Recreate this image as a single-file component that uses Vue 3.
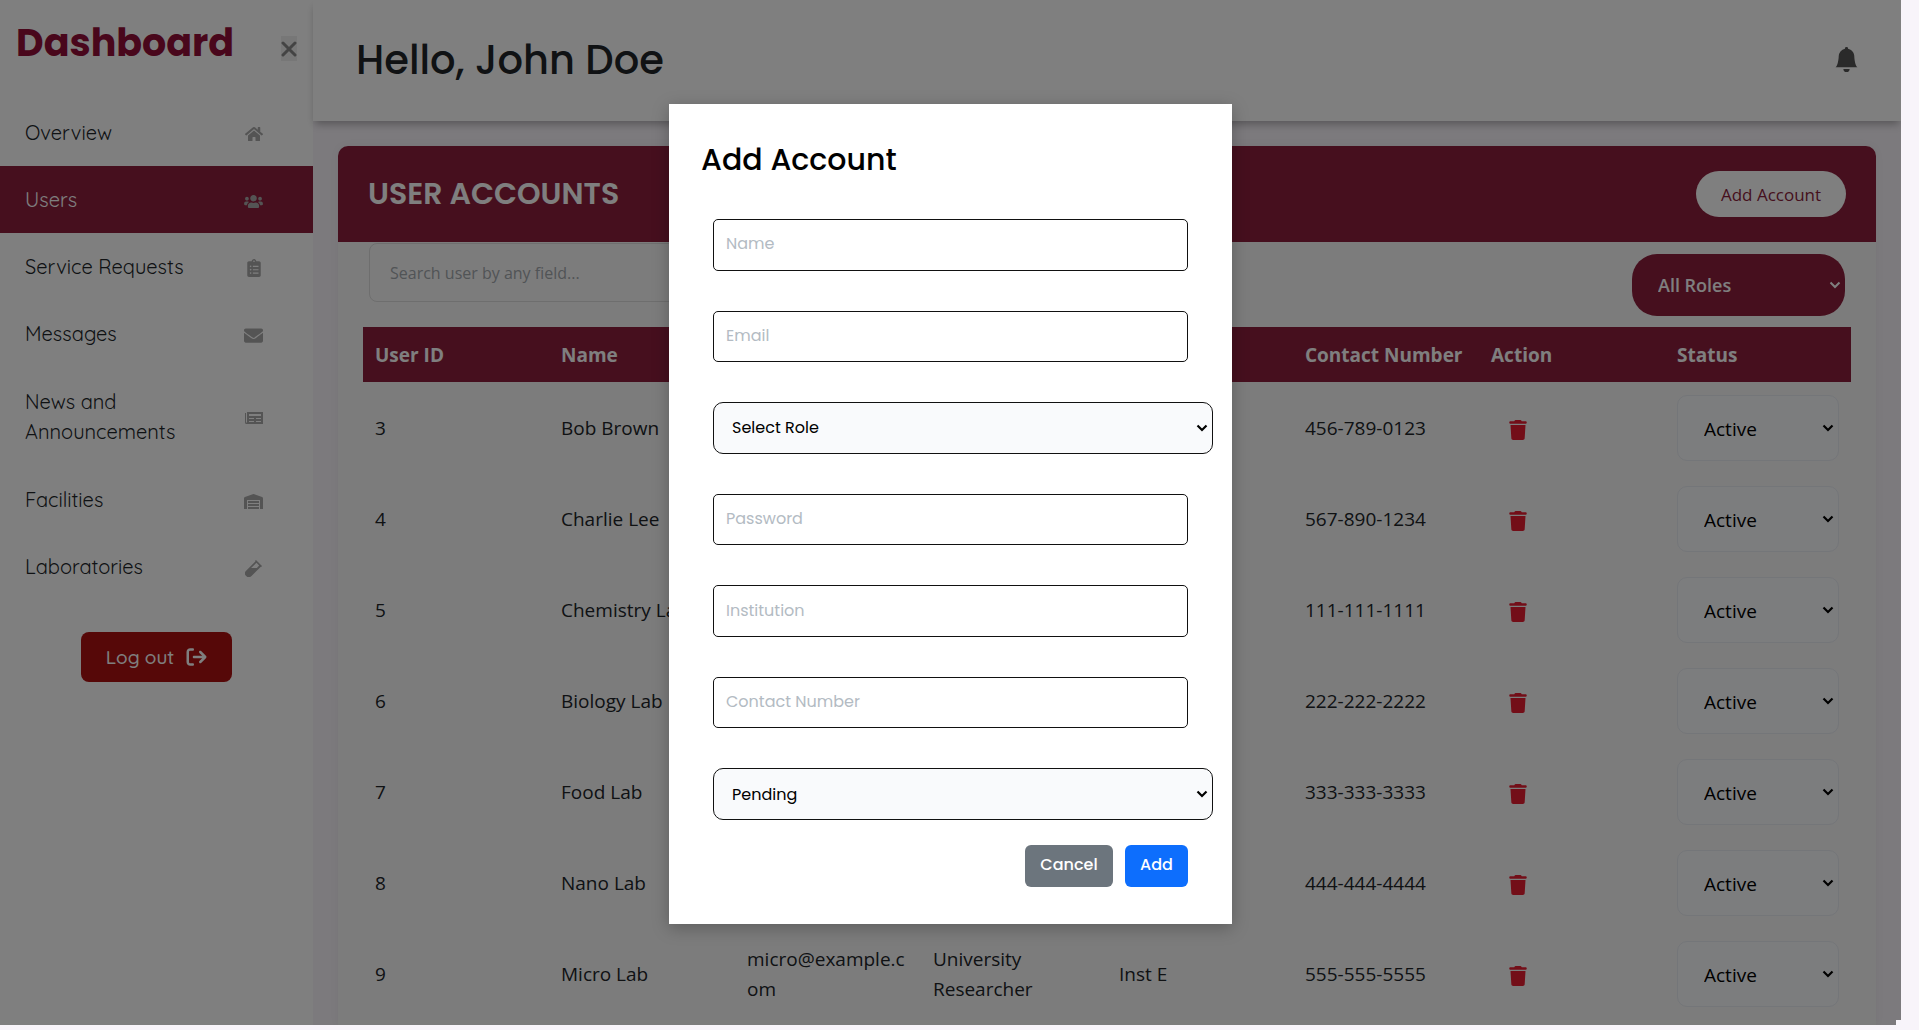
<script setup>
import { ref } from 'vue'

const navItems = [
  { label: 'Overview', icon: 'home' },
  { label: 'Users', icon: 'users', active: true },
  { label: 'Service Requests', icon: 'clipboard' },
  { label: 'Messages', icon: 'envelope' },
  { label: 'News and Announcements', icon: 'newspaper', tall: true },
  { label: 'Facilities', icon: 'warehouse' },
  { label: 'Laboratories', icon: 'vial' },
]

const icons = {
  home: {
    box: '0 0 576 512', w: 18, h: 16,
    d: 'M280.37 148.26L96 300.11V464a16 16 0 0 0 16 16l112.06-.29a16 16 0 0 0 15.92-16V368a16 16 0 0 1 16-16h64a16 16 0 0 1 16 16v95.64a16 16 0 0 0 16 16.05L464 480a16 16 0 0 0 16-16V300L295.67 148.26a12.19 12.19 0 0 0-15.3 0zM571.6 251.47L488 182.56V44.05a12 12 0 0 0-12-12h-56a12 12 0 0 0-12 12v72.61L318.47 43a48 48 0 0 0-61 0L4.34 251.47a12 12 0 0 0-1.6 16.9l25.5 31A12 12 0 0 0 45.15 301l235.22-193.74a12.19 12.19 0 0 1 15.3 0L530.9 301a12 12 0 0 0 16.9-1.6l25.5-31a12 12 0 0 0-1.7-16.93z',
  },
  users: {
    box: '0 0 640 512', w: 19, h: 15,
    d: 'M96 224c35.3 0 64-28.7 64-64s-28.7-64-64-64-64 28.7-64 64 28.7 64 64 64zm448 0c35.3 0 64-28.7 64-64s-28.7-64-64-64-64 28.7-64 64 28.7 64 64 64zm32 32h-64c-17.6 0-33.5 7.1-45.1 18.6 40.3 22.1 68.9 62 75.1 109.4h66c17.7 0 32-14.3 32-32v-32c0-35.3-28.7-64-64-64zm-256 0c61.9 0 112-50.1 112-112S381.9 32 320 32 208 82.1 208 144s50.1 112 112 112zm76.8 32h-8.3c-20.8 10-43.9 16-68.5 16s-47.6-6-68.5-16h-8.3C179.6 288 128 339.6 128 403.2V432c0 26.5 21.5 48 48 48h288c26.5 0 48-21.5 48-48v-28.8c0-63.6-51.6-115.2-115.2-115.2zm-223.7-13.4C161.5 263.1 145.6 256 128 256H64c-35.3 0-64 28.7-64 64v32c0 17.7 14.3 32 32 32h65.9c6.3-47.4 34.9-87.3 75.2-109.4z',
  },
  clipboard: {
    box: '0 0 384 512', w: 14, h: 18,
    d: 'M336 64h-80c0-35.3-28.7-64-64-64s-64 28.7-64 64H48C21.5 64 0 85.5 0 112v352c0 26.5 21.5 48 48 48h288c26.5 0 48-21.5 48-48V112c0-26.5-21.5-48-48-48zM96 424c-13.3 0-24-10.7-24-24s10.7-24 24-24 24 10.7 24 24-10.7 24-24 24zm0-96c-13.3 0-24-10.7-24-24s10.7-24 24-24 24 10.7 24 24-10.7 24-24 24zm0-96c-13.3 0-24-10.7-24-24s10.7-24 24-24 24 10.7 24 24-10.7 24-24 24zm96-192c13.3 0 24 10.7 24 24s-10.7 24-24 24-24-10.7-24-24 10.7-24 24-24zm128 376H160v-32h160zm0-96H160v-32h160zm0-96H160v-32h160z',
  },
  envelope: {
    box: '0 0 512 512', w: 19, h: 19,
    d: 'M502.3 190.8c3.9-3.1 9.7-.2 9.7 4.7V400c0 26.5-21.5 48-48 48H48c-26.5 0-48-21.5-48-48V195.6c0-5 5.7-7.8 9.7-4.7 22.4 17.4 52.1 39.5 154.1 113.6 21.1 15.4 56.7 47.8 92.2 47.6 35.7.3 72-32.8 92.3-47.6 102-74.1 131.6-96.3 154-113.7zM256 320c23.2.4 56.6-29.2 73.4-41.4 132.7-96.3 142.8-104.7 173.4-128.7 5.8-4.5 9.2-11.5 9.2-18.9v-19c0-26.5-21.5-48-48-48H48c-26.5 0-48 21.5-48 48v19c0 7.4 3.4 14.3 9.2 18.9 30.6 23.9 40.7 32.4 173.4 128.7 16.8 12.2 50.2 41.8 73.4 41.4z',
  },
  newspaper: {
    box: '0 0 18 12', w: 18, h: 12,
    d: 'M2 0H18V12H1.5A1.5 1.5 0 0 1 0 10.5V1H1V10.5H2ZM4 2V4H16V2ZM4 6V7H9V6ZM11 6V7H16V6ZM4 9V10H9V9ZM11 9V10H16V9Z',
  },
  warehouse: {
    box: '0 0 19 15', w: 19, h: 15,
    d: 'M0 15V4.2Q0 3.3 .9 2.9L8.7 .2Q9.5 -.1 10.3 .2L18.1 2.9Q19 3.3 19 4.2V15H16V6H3V15ZM4 7H15V9H4ZM4 10H15V12H4ZM4 13H15V15H4Z',
  },
  vial: {
    box: '0 0 17 17', w: 17, h: 17,
    d: 'M10.3 .4L11 0L17 6L16.5 6.8L15.6 6.9L6.5 16A3.7 3.7 0 0 1 1.1 10.7L10.3 1.5ZM11.4 2.8L6.1 8.1H11.8L14.2 5.6Z',
  },
}

const columns = ['User ID', 'Name', 'Email', 'Role', 'Institution', 'Contact Number', 'Action', 'Status']

const users = ref([
  { id: 3, name: 'Bob Brown', contact: '456-789-0123', status: 'Active' },
  { id: 4, name: 'Charlie Lee', contact: '567-890-1234', status: 'Active' },
  { id: 5, name: 'Chemistry Lab', contact: '111-111-1111', status: 'Active' },
  { id: 6, name: 'Biology Lab', contact: '222-222-2222', status: 'Active' },
  { id: 7, name: 'Food Lab', contact: '333-333-3333', status: 'Active' },
  { id: 8, name: 'Nano Lab', contact: '444-444-4444', status: 'Active' },
  { id: 9, name: 'Micro Lab', email: 'micro@example.com', role: 'University Researcher', institution: 'Inst E', contact: '555-555-5555', status: 'Active' },
])

const fields = [
  { key: 'name', label: 'Name', type: 'text' },
  { key: 'email', label: 'Email', type: 'email' },
  { key: 'role', label: 'Role', options: ['Select Role'] },
  { key: 'password', label: 'Password', type: 'password' },
  { key: 'institution', label: 'Institution', type: 'text' },
  { key: 'contact', label: 'Contact Number', type: 'text' },
  { key: 'status', label: 'Status', options: ['Pending'] },
]

const form = ref({
  name: '', email: '', role: 'Select Role', password: '',
  institution: '', contact: '', status: 'Pending',
})
const search = ref('')
</script>

<template>
  <div class="shell">
    <aside class="sidebar">
      <div class="brand">
        <span class="brand-name">Dashboard</span>
        <button class="close" type="button" aria-label="Close menu">
          <svg width="16" height="16" viewBox="0 0 16 16"><path d="M2 2L14 14M14 2L2 14" /></svg>
        </button>
      </div>
      <nav class="nav">
        <a
          v-for="item in navItems"
          :key="item.label"
          href="#"
          class="nav-item"
          :class="{ active: item.active, tall: item.tall }"
        >
          <span class="nav-label">{{ item.label }}</span>
          <span class="nav-icon">
            <svg :viewBox="icons[item.icon].box" :width="icons[item.icon].w" :height="icons[item.icon].h">
              <path fill-rule="evenodd" :d="icons[item.icon].d" />
            </svg>
          </span>
        </a>
      </nav>
      <button class="logout" type="button">
        Log out
        <svg width="21" height="20" viewBox="0 0 512 512"><path d="M502.6 278.6c12.5-12.5 12.5-32.8 0-45.3l-128-128c-12.5-12.5-32.8-12.5-45.3 0s-12.5 32.8 0 45.3L402.7 224 192 224c-17.7 0-32 14.3-32 32s14.3 32 32 32l210.7 0-73.4 73.4c-12.5 12.5-12.5 32.8 0 45.3s32.8 12.5 45.3 0l128-128zM160 96c17.7 0 32-14.3 32-32s-14.3-32-32-32L96 32C43 32 0 75 0 128L0 384c0 53 43 96 96 96l64 0c17.7 0 32-14.3 32-32s-14.3-32-32-32l-64 0c-17.7 0-32-14.3-32-32l0-256c0-17.7 14.3-32 32-32l64 0z" /></svg>
      </button>
    </aside>

    <div class="main">
      <header class="topbar">
        <h1>Hello, John Doe</h1>
        <button class="bell" type="button" aria-label="Notifications">
          <svg width="25" height="25" viewBox="0 0 16 16"><path d="M8 16a2 2 0 0 0 2-2H6a2 2 0 0 0 2 2m.995-14.901a1 1 0 1 0-1.99 0A5 5 0 0 0 3 6c0 1.098-.5 6-2 7h14c-1.5-1-2-5.902-2-7 0-2.42-1.72-4.44-4.005-4.901" /></svg>
        </button>
      </header>

      <section class="card">
        <div class="card-head">
          <h2>USER ACCOUNTS</h2>
          <button class="add-account" type="button">Add Account</button>
        </div>
        <div class="tools">
          <input v-model="search" class="search" type="text" aria-label="Search users" placeholder="Search user by any field..." />
          <select class="role-filter" aria-label="Filter by role">
            <option>All Roles</option>
          </select>
        </div>
        <div class="table-wrap">
          <table>
            <thead>
              <tr>
                <th v-for="column in columns" :key="column" scope="col">{{ column }}</th>
              </tr>
            </thead>
            <tbody>
              <tr v-for="user in users" :key="user.id">
                <td>{{ user.id }}</td>
                <td>{{ user.name }}</td>
                <td>{{ user.email }}</td>
                <td>{{ user.role }}</td>
                <td>{{ user.institution }}</td>
                <td>{{ user.contact }}</td>
                <td>
                  <button class="trash" type="button" :aria-label="'Delete ' + user.name">
                    <svg width="18" height="20" viewBox="0 0 448 512"><path d="M135.2 17.7L128 32H32C14.3 32 0 46.3 0 64S14.3 96 32 96H416c17.7 0 32-14.3 32-32s-14.3-32-32-32H320l-7.2-14.3C307.4 6.8 296.3 0 284.2 0H163.8c-12.1 0-23.2 6.8-28.6 17.7zM416 128H32L53.2 467c1.6 25.3 22.6 45 47.9 45H346.9c25.3 0 46.3-19.7 47.9-45L416 128z" /></svg>
                  </button>
                </td>
                <td>
                  <select v-model="user.status" class="status" :aria-label="'Status of ' + user.name">
                    <option>Active</option>
                  </select>
                </td>
              </tr>
            </tbody>
          </table>
        </div>
      </section>
    </div>

    <div class="overlay"></div>
    <div class="dialog-layer">
      <form class="dialog" role="dialog" aria-labelledby="dialog-title" @submit.prevent>
        <h3 id="dialog-title">Add Account</h3>
        <div class="fields">
          <template v-for="field in fields" :key="field.key">
            <select v-if="field.options" v-model="form[field.key]" class="field-select" :aria-label="field.label">
              <option v-for="option in field.options" :key="option">{{ option }}</option>
            </select>
            <input v-else v-model="form[field.key]" class="field-input" :type="field.type" :placeholder="field.label" :aria-label="field.label" />
          </template>
        </div>
        <div class="actions">
          <button class="btn cancel" type="button">Cancel</button>
          <button class="btn add" type="submit">Add</button>
        </div>
      </form>
    </div>
  </div>
</template>

<style>
body {
  background: #f8f4fa;
}
</style>

<style scoped>
* {
  box-sizing: border-box;
}

button,
input,
select {
  font-family: inherit;
}

select {
  appearance: none;
  background-image: url("data:image/svg+xml,%3Csvg xmlns='http://www.w3.org/2000/svg' width='12' height='8'%3E%3Cpath d='M1.5 1.5L6 6L10.5 1.5' fill='none' stroke='%23000' stroke-width='2.2'/%3E%3C/svg%3E");
  background-repeat: no-repeat;
  background-position: right 4px center;
}

.shell {
  position: relative;
  display: flex;
  height: calc(100vh - 5px);
  margin-right: 18px;
  overflow: hidden;
  font-family: 'Segoe UI', 'Open Sans', sans-serif;
  font-size: 19px;
  line-height: 30px;
  color: #212529;
}

/* Sidebar */
.sidebar {
  flex: none;
  display: flex;
  flex-direction: column;
  width: 313px;
  background: #fff;
  font-family: Quicksand, Lato, sans-serif;
  font-size: 20px;
}

.brand {
  display: flex;
  align-items: center;
  justify-content: space-between;
  height: 99px;
  padding: 0 16px 14px;
}

.brand-name {
  font-family: Poppins, Inter, sans-serif;
  font-size: 38px;
  font-weight: 700;
  line-height: 48px;
  color: #930f38;
}

.close {
  display: flex;
  align-items: center;
  width: 16px;
  height: 25px;
  margin-top: 12px;
  padding: 0;
  border: 0;
  background: #efefef;
}

.close path {
  fill: none;
  stroke: #888;
  stroke-width: 3;
  stroke-linecap: round;
}

.nav {
  display: flex;
  flex-direction: column;
}

.nav-item {
  display: flex;
  align-items: center;
  justify-content: space-between;
  min-height: 67px;
  padding: 0 50px 0 25px;
  color: #212529;
  text-decoration: none;
}

.nav-item.tall {
  min-height: 99px;
}

.nav-item.active {
  background: #8c1e3c;
  color: #fff;
}

.nav-label {
  max-width: 170px;
}

.nav-icon {
  display: flex;
  justify-content: center;
  width: 19px;
  padding-top: 3px;
  fill: #a9a9a9;
}

.logout {
  display: flex;
  align-items: center;
  justify-content: center;
  gap: 12px;
  align-self: center;
  width: 151px;
  height: 50px;
  margin-top: 32px;
  padding: 0;
  border: 0;
  border-radius: 8px;
  background: #ac1010;
  color: #fff;
  font-size: 19px;
  font-weight: 500;
  fill: #fff;
}

/* Main area */
.main {
  flex: 1;
  min-width: 0;
  display: flex;
  flex-direction: column;
}

.topbar {
  flex: none;
  display: flex;
  align-items: center;
  justify-content: space-between;
  height: 121px;
  padding: 0 42px 2px 43px;
  background: #fff;
  box-shadow: 0 5px 8px -2px rgba(0, 0, 0, 0.3);
}

.topbar h1 {
  margin: 0;
  font-family: Poppins, Inter, sans-serif;
  font-size: 40px;
  font-weight: 500;
  line-height: 48px;
}

.bell {
  display: flex;
  padding: 0;
  border: 0;
  background: none;
  fill: #545454;
}

.card {
  flex: 1 0 auto;
  margin: 25px 25px 0;
  border-radius: 10px 10px 0 0;
  background: #f9f9f9;
  box-shadow: 0 0 10px rgba(0, 0, 0, 0.05);
}

.card-head {
  display: flex;
  align-items: center;
  justify-content: space-between;
  height: 96px;
  padding: 0 30px;
  border-radius: 10px 10px 0 0;
  background: #8c1e3c;
}

.card-head h2 {
  margin: 0;
  font-family: Poppins, Inter, sans-serif;
  font-size: 30px;
  font-weight: 600;
  line-height: 36px;
  color: #fff;
}

.add-account {
  width: 150px;
  height: 46px;
  padding: 0;
  border: 0;
  border-radius: 23px;
  background: #fff;
  color: #8c1e3c;
  font-size: 17px;
}

.tools {
  display: flex;
  align-items: flex-start;
  justify-content: space-between;
  height: 85px;
  padding: 1px 31px 0;
}

.search {
  width: 500px;
  height: 59px;
  padding: 0 20px;
  border: 1px solid #dcdcdc;
  border-radius: 8px;
  background: #f9f9f9;
  font-size: 16px;
}

.search::placeholder {
  color: #a3a8ad;
}

.role-filter {
  width: 213px;
  height: 62px;
  margin-top: 11px;
  padding: 0 26px;
  border: 0;
  border-radius: 25px;
  background-color: #8c1e3c;
  background-image: url("data:image/svg+xml,%3Csvg xmlns='http://www.w3.org/2000/svg' width='12' height='8'%3E%3Cpath d='M1.5 1.5L6 6L10.5 1.5' fill='none' stroke='%23fff' stroke-width='2'/%3E%3C/svg%3E");
  color: #fff;
  font-size: 18px;
  font-weight: 600;
}

.table-wrap {
  padding: 0 25px;
}

table {
  width: 100%;
  table-layout: fixed;
  border-collapse: collapse;
}

th {
  height: 55px;
  padding: 0 12px;
  background: #8c1e3c;
  color: #fff;
  font-weight: 700;
  text-align: left;
  white-space: nowrap;
}

td {
  height: 91px;
  padding: 0 12px;
  vertical-align: middle;
  overflow-wrap: anywhere;
}

.trash {
  display: flex;
  margin-left: 18px;
  padding: 4px 0 0;
  border: 0;
  background: none;
  fill: #e61c30;
}

.status {
  display: block;
  width: 100%;
  height: 66px;
  padding: 2px 26px 0;
  border: 1px solid #e9ecf2;
  border-radius: 10px;
  background-color: #f8fafc;
  color: #000;
  font-size: 19px;
}

/* Dialog */
.overlay {
  position: absolute;
  inset: 0;
  background: rgba(0, 0, 0, 0.5);
  clip-path: polygon(0 0, 100% 0, 100% calc(100% - 5px), calc(100% - 5px) calc(100% - 5px), calc(100% - 5px) 100%, 0 100%);
}

.dialog-layer {
  position: absolute;
  inset: 0;
  display: flex;
  align-items: center;
  justify-content: center;
  padding-top: 3px;
}

.dialog {
  width: 563px;
  padding: 32px 44px 37px;
  background: #fff;
  box-shadow: 0 4px 16px rgba(0, 0, 0, 0.25);
  font-family: Poppins, Inter, sans-serif;
  font-size: 16px;
}

.dialog h3 {
  margin: 0 -12px 35px;
  font-size: 30px;
  font-weight: 500;
  line-height: 48px;
  color: #000;
}

.fields {
  display: grid;
  grid-template-rows: repeat(7, 1fr);
  grid-template-columns: minmax(0, 1fr);
  gap: 40px;
  height: 601px;
}

.field-input {
  width: 100%;
  padding: 0 12px 2px;
  border: 1px solid #111;
  border-radius: 5px;
  background: #fff;
  font-size: 16px;
}

.field-input::placeholder {
  color: #b3bbc3;
}

.field-select {
  width: 500px;
  padding: 0 18px;
  border: 1px solid #111;
  border-radius: 10px;
  background-color: #f9fafc;
  color: #000;
  font-size: 16px;
}

.actions {
  display: flex;
  justify-content: flex-end;
  gap: 12px;
  margin-top: 25px;
}

.btn {
  height: 42px;
  padding: 0 0 3px;
  border: 0;
  border-radius: 6px;
  color: #fff;
  font-size: 16px;
  font-weight: 500;
}

.cancel {
  width: 88px;
  background: #6c757d;
}

.add {
  width: 63px;
  background: #0d6efd;
}
</style>
